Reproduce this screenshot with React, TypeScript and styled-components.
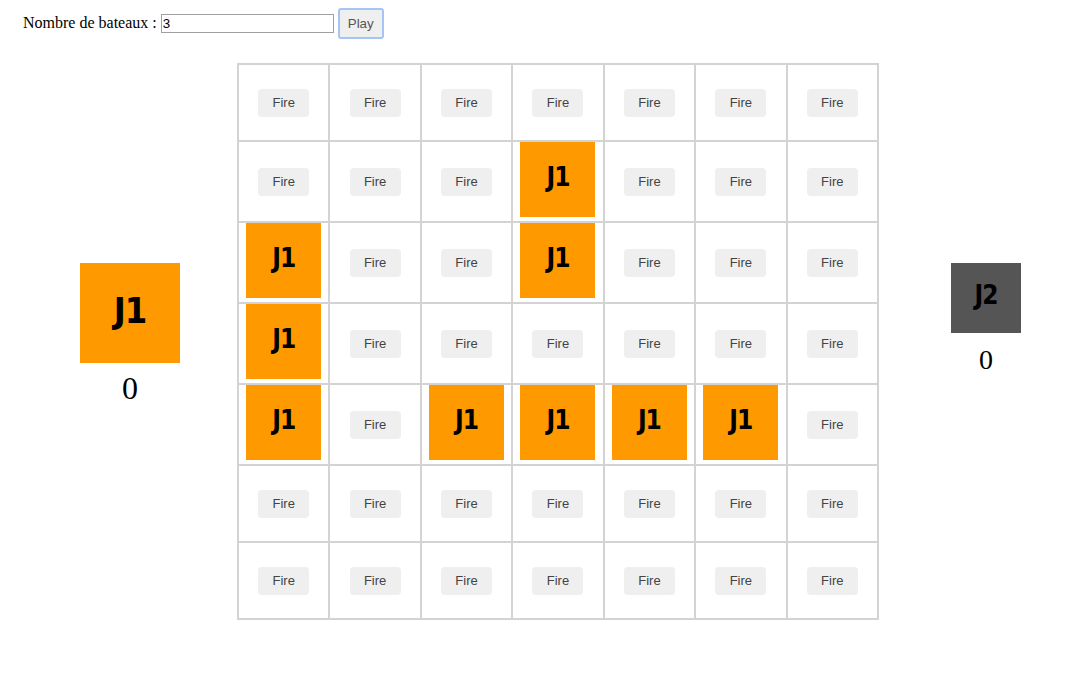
import styled, { createGlobalStyle } from "styled-components";

const GlobalStyle = createGlobalStyle`
  body {
    margin: 8px;
    font-family: "Liberation Serif", "Times New Roman", serif;
    background: #ffffff;
    overflow: hidden;
  }
`;

const Page = styled.div`
  padding: 0 15px;
`;

const Header = styled.div`
  display: flex;
  align-items: center;
  height: 30px;
  font-size: 16px;
  color: #000000;
`;

const CountInput = styled.input`
  width: 173px;
  height: 19px;
  box-sizing: border-box;
  margin-left: 4px;
  padding: 0 1px;
  border: 1px solid #a0a0a0;
  font-family: "Liberation Sans", Arial, sans-serif;
  font-size: 13.33px;
  color: #000000;
`;

const PlayButton = styled.button`
  width: 46px;
  height: 31px;
  margin-left: 4px;
  box-sizing: border-box;
  border: 2px solid #a6c4f6;
  border-radius: 3px;
  background: #efefef;
  font-family: "Liberation Sans", Arial, sans-serif;
  font-size: 13.33px;
  color: #555555;
`;

const Main = styled.div`
  display: flex;
  align-items: flex-start;
  margin-top: 25px;
`;

const Side = styled.div`
  flex: 0 0 214px;
  display: flex;
  flex-direction: column;
  align-items: center;
  padding-top: 200px;
`;

const PlayerTile = styled.div<{ $size: number; $color: string; $font: number }>`
  display: flex;
  align-items: center;
  justify-content: center;
  width: ${(p) => p.$size}px;
  height: ${(p) => p.$size}px;
  padding-bottom: 6px;
  box-sizing: border-box;
  background: ${(p) => p.$color};
  font-family: "DejaVu Sans Condensed", "DejaVu Sans", sans-serif;
  font-weight: bold;
  font-size: ${(p) => p.$font}px;
  letter-spacing: -1px;
  color: #000000;
`;

const Score = styled.div<{ $font: number; $gap: number }>`
  margin-top: ${(p) => p.$gap}px;
  font-size: ${(p) => p.$font}px;
  line-height: 1.15;
`;

const Board = styled.div`
  flex: 0 0 642px;
  box-sizing: border-box;
  display: grid;
  grid-template-columns: repeat(7, 1fr);
  gap: 2px;
  padding: 2px;
  background: #d3d3d3;
`;

const Cell = styled.div`
  display: flex;
  align-items: center;
  justify-content: center;
  min-height: 75px;
  background: #ffffff;
`;

const FireButton = styled.button`
  width: 51px;
  height: 28px;
  border: none;
  border-radius: 4px;
  background: #efefef;
  font-family: "Liberation Sans", Arial, sans-serif;
  font-size: 13px;
  color: #444444;
  padding: 0;
`;

const ShipTile = styled.div`
  display: flex;
  align-items: center;
  justify-content: center;
  width: 75px;
  height: 75px;
  margin-bottom: 4px;
  padding-bottom: 5px;
  box-sizing: border-box;
  background: #ff9900;
  font-family: "DejaVu Sans Condensed", "DejaVu Sans", sans-serif;
  font-weight: bold;
  font-size: 26px;
  letter-spacing: -1px;
  color: #000000;
`;

const ships: Record<string, boolean> = {
  "1-3": true,
  "2-0": true,
  "2-3": true,
  "3-0": true,
  "4-0": true,
  "4-2": true,
  "4-3": true,
  "4-4": true,
  "4-5": true,
};

const rows = Array.from({ length: 7 }, (_, r) => r);
const cols = Array.from({ length: 7 }, (_, c) => c);

const App = () => {
  return (
    <Page>
      <GlobalStyle />
      <Header>
        Nombre de bateaux :<CountInput defaultValue="3" />
        <PlayButton>Play</PlayButton>
      </Header>
      <Main>
        <Side>
          <PlayerTile $size={100} $color="#ff9900" $font={36}>
            J1
          </PlayerTile>
          <Score $font={32} $gap={7}>0</Score>
        </Side>
        <Board>
          {rows.map((r) =>
            cols.map((c) => (
              <Cell key={`${r}-${c}`}>
                {ships[`${r}-${c}`] ? <ShipTile>J1</ShipTile> : <FireButton>Fire</FireButton>}
              </Cell>
            ))
          )}
        </Board>
        <Side>
          <PlayerTile $size={70} $color="#555555" $font={26}>
            J2
          </PlayerTile>
          <Score $font={28} $gap={11}>0</Score>
        </Side>
      </Main>
    </Page>
  );
};

export default App;
